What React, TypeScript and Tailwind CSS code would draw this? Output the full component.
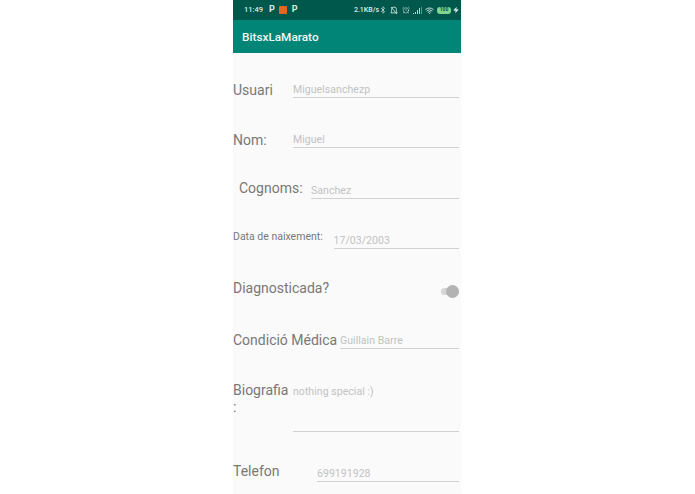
import React from 'react';
import { AlarmClock, Bluetooth, Wifi, Zap } from 'lucide-react';

const Field = ({ value, className = '' }: { value: string; className?: string }) => (
  <div className={`border-b border-[#d2d2d2] text-[10.5px] leading-[14px] text-[#c2c2c2] tracking-[0.05px] ${className}`}>{value}</div>
);

const Signal = () => (
  <svg width="9" height="7" viewBox="0 0 9 7" fill="#b5d6d0">
    <path d="M0 7h1V6H0zM2 7h1V5H2zM4 7h1V3H4zM6 7h1V1H6z" />
    <path d="M8 7h1V0H8z" opacity="0.5" />
  </svg>
);

const MutedAlarm = () => (
  <svg width="8" height="9" viewBox="0 0 8 9" fill="none" stroke="#cfe3df" strokeWidth="0.9">
    <path d="M4 1a2.4 2.4 0 0 1 2.4 2.4v2L7.2 6.9H.8l.8-1.5v-2A2.4 2.4 0 0 1 4 1z" />
    <path d="M1 1l6 7" />
  </svg>
);

export default function App() {
  return (
    <div className="h-[494px] w-[695px] overflow-hidden bg-white font-['Roboto',sans-serif]">
      <div className="ml-[233px] flex h-full w-[228px] flex-col bg-[#fafafa]">
        {/* status bar */}
        <div className="flex h-[20px] items-center bg-[#00574b] pl-[11px] pr-[2px] text-[#dcebe8]">
          <span className="text-[7.5px] font-medium">11:49</span>
          <span className="ml-[6px] text-[9px] font-bold">P</span>
          <span className="ml-[4px] h-[8px] w-[8px] rounded-[1px] bg-[#e8641f]" />
          <span className="ml-[5px] text-[9px] font-bold">P</span>
          <span className="ml-auto text-[7px] font-medium">2.1KB/s</span>
          <Bluetooth className="h-[8px] w-[8px]" strokeWidth={2} />
          <span className="ml-[3px]"><MutedAlarm /></span>
          <AlarmClock className="ml-[4px] h-[8px] w-[8px]" strokeWidth={1.6} />
          <span className="ml-[3px]"><Signal /></span>
          <Wifi className="ml-[3px] h-[9px] w-[9px]" strokeWidth={2.4} />
          <span className="ml-[3px] flex h-[7px] w-[14px] items-center justify-center rounded-[3px] bg-[#7fd68f] text-[5px] font-bold text-[#00574b]">100</span>
          <Zap className="ml-[2px] h-[6px] w-[6px]" fill="currentColor" />
        </div>
        {/* app bar */}
        <div className="flex h-[33px] items-center bg-[#008577] pl-[9px] pt-[2px] text-[11.8px] font-medium text-[#f2f8f7]">BitsxLaMarato</div>

        <div className="flex flex-col pr-[2px] text-[#787878]">
          <div className="mt-[28px] flex h-[18px] items-center">
            <span className="w-[60px] pt-[1px] text-[14px]">Usuari</span>
            <Field value="Miguelsanchezp" className="flex-1" />
          </div>
          <div className="mt-[32px] flex h-[18px] items-center">
            <span className="w-[60px] pt-[1px] text-[14px]">Nom:</span>
            <Field value="Miguel" className="flex-1" />
          </div>
          <div className="mt-[33px] flex h-[18px] items-center">
            <span className="w-[78px] pl-[6px] pb-[6px] text-[14px]">Cognoms:</span>
            <Field value="Sanchez" className="flex-1" />
          </div>
          <div className="mt-[32px] flex h-[18px] items-center">
            <span className="w-[100.5px] pb-[9px] text-[10.5px]">Data de naixement:</span>
            <Field value="17/03/2003" className="flex-1" />
          </div>
          <div className="mt-[31px] flex h-[20px] items-center justify-between">
            <span className="pb-[5px] text-[14px]">Diagnosticada?</span>
            <div className="relative h-[7px] w-[18px] rounded-full bg-[#d6d6d6]">
              <span className="absolute -top-[3px] right-0 h-[13px] w-[13px] rounded-full bg-[#b3b3b3]" />
            </div>
          </div>
          <div className="mt-[30px] flex h-[19px] items-center">
            <span className="w-[107px] whitespace-nowrap pb-[1px] text-[14px]">Condició Médica</span>
            <Field value="Guillain Barre" className="flex-1 pt-[1px]" />
          </div>
          <div className="mt-[32px] flex h-[50px] items-start">
            <span className="w-[60px] text-[14px] leading-[17px]">Biografia<br />:</span>
            <div className="flex h-full flex-1 flex-col">
              <Field value="nothing special :)" className="h-full pt-[3px]" />
            </div>
          </div>
          <div className="mt-[32px] flex h-[19px] items-center">
            <span className="w-[84px] pb-[5px] text-[14px]">Telefon</span>
            <Field value="699191928" className="flex-1 pt-[1px]" />
          </div>
        </div>
      </div>
    </div>
  );
}
